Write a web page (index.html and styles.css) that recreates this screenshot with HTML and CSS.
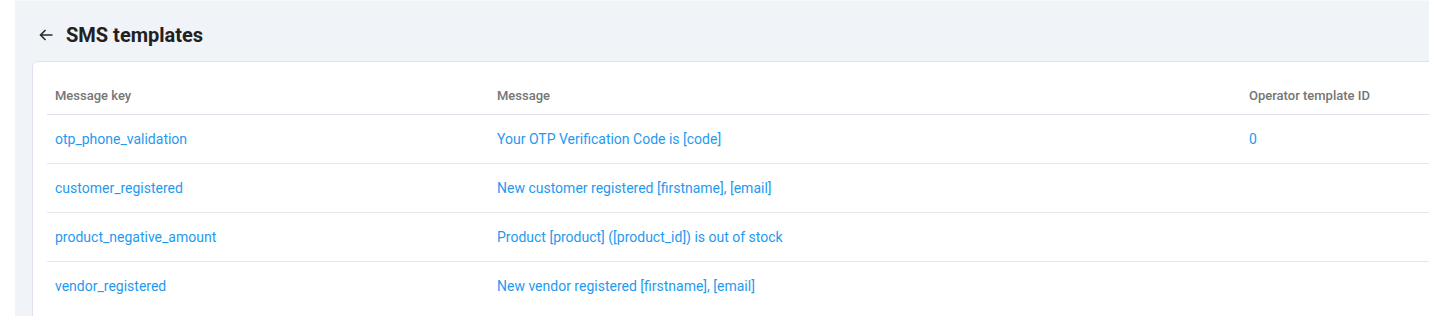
FILE: index.html
```html
<!DOCTYPE html>
<html lang="en">
<head>
    <meta charset="UTF-8">
    <meta name="viewport" content="width=device-width, initial-scale=1.0">
    <title>SMS templates</title>
    <link rel="stylesheet" href="styles.css">
</head>
<body>
    <div class="layout">
        <div class="sidebar"></div>
        <div class="main">
            <div class="page-head">
                <a href="#" class="back">
                    <svg width="16" height="16" viewBox="0 0 16 16"><path d="M14.5 8H2.5M7.5 3L2.5 8l5 5" fill="none" stroke="#2b2b2b" stroke-width="1.6"/></svg>
                </a>
                <h2>SMS templates</h2>
            </div>

            <div class="card">
                <table class="templates">
                    <thead>
                        <tr>
                            <th class="col-key">Message key</th>
                            <th class="col-msg">Message</th>
                            <th>Operator template ID</th>
                        </tr>
                    </thead>
                    <tbody>
                        <tr>
                            <td><a href="#">otp_phone_validation</a></td>
                            <td><a href="#">Your OTP Verification Code is [code]</a></td>
                            <td><a href="#">0</a></td>
                        </tr>
                        <tr>
                            <td><a href="#">customer_registered</a></td>
                            <td><a href="#">New customer registered [firstname], [email]</a></td>
                            <td></td>
                        </tr>
                        <tr>
                            <td><a href="#">product_negative_amount</a></td>
                            <td><a href="#">Product [product] ([product_id]) is out of stock</a></td>
                            <td></td>
                        </tr>
                        <tr>
                            <td><a href="#">vendor_registered</a></td>
                            <td><a href="#">New vendor registered [firstname], [email]</a></td>
                            <td></td>
                        </tr>
                    </tbody>
                </table>
            </div>
        </div>
    </div>
</body>
</html>
```

FILE: styles.css
```css
body {
    margin: 0;
    background-color: #f0f3f8;
    font-family: Roboto, "Liberation Sans", sans-serif;
    color: #222;
    overflow: hidden;
}

.layout {
    display: flex;
    height: 316px;
    overflow: hidden;
}

.sidebar {
    width: 15px;
    flex-shrink: 0;
    background-color: white;
}

.main {
    flex: 1;
    min-width: 0;
    overflow: hidden;
    border-top: 1px solid #f7f9fb;
    padding-left: 17px;
}

.page-head {
    display: flex;
    align-items: center;
    height: 52px;
    padding-top: 8px;
    padding-left: 6px;
}

.back {
    display: flex;
    width: 16px;
    height: 16px;
    margin-right: 12px;
}

.page-head h2 {
    margin: 0;
    font-size: 20px;
    font-weight: 700;
    color: #212121;
}

.card {
    width: 1440px;
    background-color: white;
    border: 1px solid #dde2ec;
    border-radius: 6px;
    padding: 15px 14px 0;
    height: 300px;
}

table {
    border-collapse: collapse;
    width: 100%;
}

th, td {
    padding: 0 8px;
    text-align: left;
}

th {
    height: 37px;
    font-size: 13px;
    font-weight: 500;
    color: #757575;
    border-bottom: 1px solid #dde2ec;
}

td {
    height: 48px;
    font-size: 14px;
    border-bottom: 1px solid #e4e7ed;
}

tbody tr:last-child td {
    border-bottom: none;
}

.col-key {
    width: 426px;
}

.col-msg {
    width: 736px;
}

td a {
    color: #1f9af0;
    text-decoration: none;
}
```
